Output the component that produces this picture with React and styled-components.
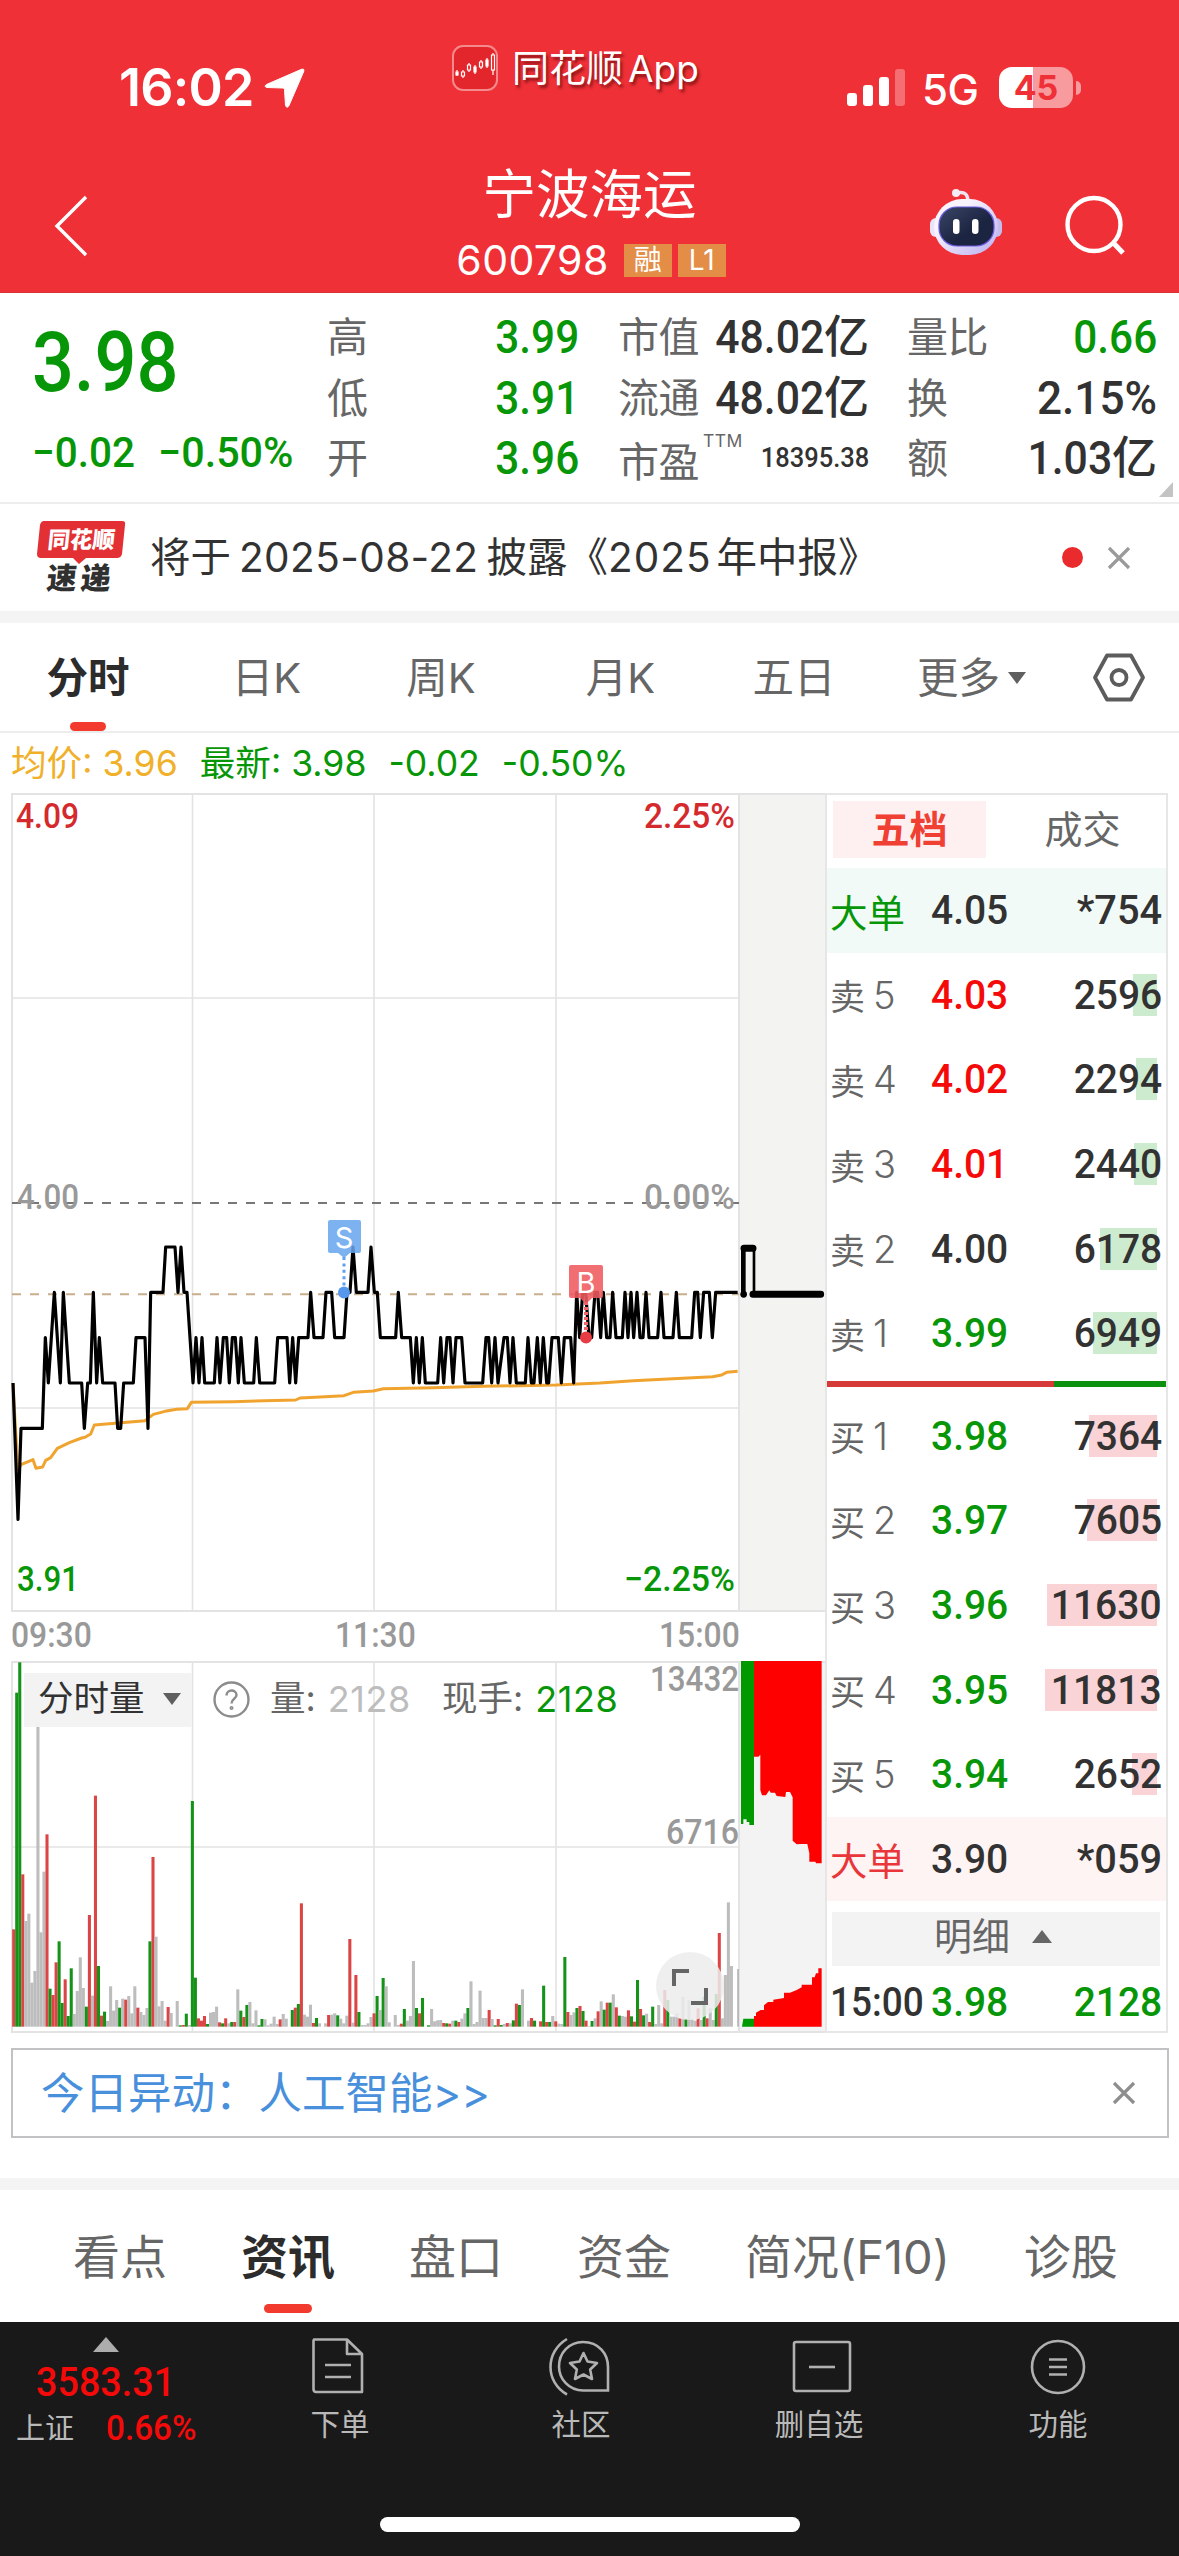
import React from 'react';
import styled, { createGlobalStyle } from 'styled-components';

const GREEN = '#079607';
const RED = '#f50a0a';

const GlobalStyle = createGlobalStyle`
  * {
    box-sizing: border-box;
  }

  body {
    margin: 0;
    background: #fff;
    font-family: Inter, 'Noto Sans CJK SC', sans-serif;
    color: #323232;
  }

  svg {
    display: block;
    flex: none;
    overflow: visible;
  }
`;

const Page = styled.div`
  width: 1179px;
  height: 2556px;
  display: flex;
  flex-direction: column;
  overflow: hidden;
  white-space: nowrap;
`;

/* narrow digits used for all prices and volumes */
const Num = styled.span`
  display: inline-block;
  font-family: Roboto, sans-serif;
  font-weight: 500;
  font-size: ${(p) => p.$size || 46}px;
  color: ${(p) => p.$color || '#323232'};
  transform: scaleX(${(p) => p.$squeeze || 0.92});
  transform-origin: ${(p) => p.$origin || 'right'} center;
`;

/* ---------- header ---------- */

const Header = styled.header`
  height: 293px;
  flex: none;
  background: #ef3037;
  color: #fff;
  border-bottom: 1px solid #d8353b;
`;

const StatusBar = styled.div`
  height: 150px;
  display: flex;
  align-items: flex-start;
  padding-left: 119px;
`;

const Clock = styled.div`
  width: 145px;
  margin-top: 57px;
  font-size: 52px;
  line-height: 62px;
  font-weight: 600;
  letter-spacing: -0.8px;
`;

const LocationIcon = styled.svg`
  margin-top: 68px;
`;

const AppMark = styled.div`
  margin-left: 147px;
  margin-top: 44px;
  width: 394px;
  display: flex;
  align-items: center;
  gap: 14px;
`;

const AppLabel = styled.span`
  font-size: 37px;
  line-height: 46px;
  padding-top: 2px;
  text-shadow: 2px 3px 3px rgba(70, 0, 0, 0.6);
`;

const AppWord = styled.span`
  margin-left: 5px;
`;

const Network = styled.span`
  margin: 64px 0 0 17px;
  width: 77px;
  font-size: 42px;
  line-height: 51px;
  font-weight: 500;
  letter-spacing: -0.5px;
`;

const Battery = styled.div`
  width: 74px;
  height: 41px;
  margin-top: 67px;
  border-radius: 13px;
  background: linear-gradient(90deg, #fff 46%, #f79b9f 46%);
  color: #ef3037;
  font-size: 34px;
  line-height: 42px;
  font-weight: 700;
  text-align: center;
`;

const BatteryTip = styled.div`
  width: 5px;
  height: 14px;
  margin: 81px 0 0 3px;
  border-radius: 0 7px 7px 0;
  background: #f79b9f;
`;

const TitleBar = styled.div`
  height: 142px;
  display: grid;
  grid-template-columns: 320px 1fr 320px;
`;

const BackIcon = styled.svg`
  margin: 45px 0 0 53px;
`;

const TitleBlock = styled.div`
  display: flex;
  flex-direction: column;
  align-items: center;
  padding-top: 14px;
`;

const StockName = styled.h1`
  margin: 0;
  font-size: 53.5px;
  line-height: 62px;
  font-weight: 400;
`;

const CodeRow = styled.div`
  display: flex;
  align-items: center;
  margin: 14px 0 0 9px;
  height: 40px;
`;

const Code = styled.span`
  font-size: 41px;
  line-height: 40px;
  letter-spacing: 0.4px;
  margin-right: 15px;
`;

const Badge = styled.span`
  width: 48px;
  height: 33px;
  margin-right: 6px;
  background: #e38d47;
  font-size: 28px;
  line-height: 33px;
  text-align: center;
`;

const TitleIcons = styled.div`
  display: flex;
  padding: 38px 0 0 71px;
  gap: 60px;
`;

/* ---------- quote ---------- */

const Quote = styled.section`
  position: relative;
  height: 211px;
  flex: none;
  display: flex;
  padding: 14px 0 0 32px;
  border-bottom: 2px solid #ededed;
`;

const PriceBlock = styled.div`
  width: 295px;
`;

const BigPrice = styled.div`
  height: 110px;
  line-height: 112px;
`;

const Change = styled.div`
  display: flex;
  height: 70px;
  line-height: 71px;
`;

const ChangeValue = styled.div`
  width: ${(p) => p.$width}px;
`;

const QuoteColumn = styled.div`
  width: ${(p) => p.$width}px;
  margin-right: ${(p) => p.$gap || 0}px;
`;

const QuoteRow = styled.div`
  height: 60.5px;
  display: flex;
  justify-content: space-between;
  align-items: center;
  line-height: 60px;
`;

const QuoteLabel = styled.span`
  font-size: 41px;
  color: #666;
  letter-spacing: -0.5px;
  padding-top: ${(p) => p.$drop || 0}px;
`;

const Sup = styled.sup`
  font-size: 17.5px;
  line-height: 1;
  vertical-align: 30px;
  margin-left: 4px;
  letter-spacing: 0.5px;
`;

const AmountValue = styled.span`
  display: flex;
  align-items: center;
`;

const Unit = styled.span`
  font-size: 45px;
  font-weight: 500;
`;

const Corner = styled.div`
  position: absolute;
  right: 6px;
  bottom: 5px;
  border-left: 14px solid transparent;
  border-bottom: 15px solid #c4c4c4;
`;

/* ---------- news ---------- */

const NewsBar = styled.section`
  height: 107px;
  flex: none;
  display: flex;
  align-items: center;
  padding-left: 35px;
`;

const NewsText = styled.div`
  width: 910px;
  padding-left: 22px;
  font-size: 40.5px;
  line-height: 60px;
  display: flex;
`;

const NewsPart = styled.span`
  letter-spacing: ${(p) => p.$track || 0}px;
  margin-right: ${(p) => p.$after || 0}px;
`;

const RedDot = styled.div`
  width: 21px;
  height: 21px;
  margin: 0 25px 0 24px;
  border-radius: 50%;
  background: #ea2b2d;
`;

const Divider = styled.div`
  height: 12px;
  flex: none;
  background: #f4f4f4;
`;

/* ---------- period tabs ---------- */

const PeriodTabs = styled.nav`
  height: 110px;
  flex: none;
  display: grid;
  grid-template-columns: 176px 181px 168px 191px 156px 199px 96px;
  border-bottom: 2px solid #ededed;
`;

const Tab = styled.div`
  display: flex;
  flex-direction: column;
  align-items: center;
  padding-top: 25px;
  font-size: 41.5px;
  line-height: 60px;
  color: ${(p) => (p.$active ? '#2c2c2c' : '#666')};
  font-weight: ${(p) => (p.$active ? 700 : 400)};
`;

const TabMark = styled.div`
  width: ${(p) => p.$width}px;
  height: 9px;
  margin-top: ${(p) => p.$top}px;
  border-radius: 5px;
  background: #f23a2f;
`;

const MoreLabel = styled.div`
  display: flex;
  align-items: center;
  gap: 8px;
`;

const Caret = styled.i`
  border: 9px solid transparent;
  border-top: 12px solid #5f5f5f;
  border-bottom: 0;
`;

const Summary = styled.div`
  height: 60px;
  flex: none;
  display: flex;
  gap: 22px;
  padding-left: 11px;
  font-size: 35.6px;
  line-height: 61px;
  color: ${GREEN};
`;

const Average = styled.span`
  color: #f0b02a;
`;

/* ---------- chart and order book ---------- */

const Market = styled.main`
  height: 1240px;
  flex: none;
  display: flex;
  margin: 0 11px;
  width: 1157px;
`;

const ChartColumn = styled.div`
  width: 814px;
`;

const TimeAxis = styled.div`
  width: 729px;
  height: 49px;
  display: flex;
  justify-content: space-between;
  line-height: 47px;
`;

const VolumePanel = styled.div`
  position: relative;
`;

const VolumeHead = styled.div`
  position: absolute;
  top: 12px;
  left: 13px;
  height: 54px;
  display: flex;
  align-items: center;
  font-size: 35.5px;
  line-height: 50px;
  padding-bottom: 2px;
  color: #666;
`;

const VolumeSelect = styled.div`
  width: 168px;
  height: 54px;
  margin-top: 2px;
  padding: 0 0 2px 14px;
  display: flex;
  align-items: center;
  gap: 18px;
  background: rgba(242, 243, 243, 0.96);
  color: #323232;
`;

const HelpIcon = styled.svg`
  margin: 0 20px 0 21px;
`;

const HeadValue = styled.span`
  margin: 0 ${(p) => p.$after || 0}px 0 12px;
  font-size: 36px;
  letter-spacing: 0.6px;
  color: ${(p) => p.$color};
`;

const ExpandButton = styled.div`
  position: absolute;
  left: 645px;
  top: 291px;
  width: 68px;
  height: 68px;
  border-radius: 50%;
  background: rgba(236, 236, 236, 0.85);
`;

const Book = styled.aside`
  width: 343px;
  border: 2px solid #e6e6e6;
`;

const BookTabs = styled.div`
  height: 73px;
  display: flex;
  padding: 6px 0 0 6px;
`;

const BookTab = styled.div`
  flex: none;
  width: ${(p) => (p.$active ? 153 : 179)}px;
  height: 57px;
  font-size: 38px;
  line-height: 56px;
  text-align: center;
  font-weight: ${(p) => (p.$active ? 700 : 400)};
  color: ${(p) => (p.$active ? '#f04034' : '#666')};
  background: ${(p) => (p.$active ? '#fef0f0' : 'none')};
  padding-left: ${(p) => (p.$active ? 0 : 14)}px;
`;

const BookRow = styled.div`
  height: ${(p) => p.$height || 84.6}px;
  display: flex;
  align-items: center;
  padding: 0 4px 0 3px;
  background: ${(p) => p.$tint || 'none'};
`;

const BookLabel = styled.div`
  width: 101px;
  display: flex;
  align-items: center;
  font-size: ${(p) => p.$size || 35}px;
  color: ${(p) => p.$color || '#666'};
`;

const Level = styled.span`
  font-size: 38px;
  font-weight: 300;
  margin-left: 8px;
`;

const BookPrice = styled.div`
  width: 90px;
`;

const BookVolume = styled.div`
  flex: 1;
  height: 42px;
  line-height: 42px;
  text-align: right;
  background: linear-gradient(${(p) => p.$fill}, ${(p) => p.$fill}) no-repeat;
  background-size: ${(p) => p.$bar}px 42px;
  background-position: right 5px top;
`;

const Ratio = styled.div`
  height: 6px;
  margin: 5px 0 7px;
  background: linear-gradient(90deg, #d53a38 67%, #0a910d 67%);
`;

const DetailButton = styled.div`
  height: 54px;
  margin: 11px 6px 0 5px;
  display: flex;
  align-items: center;
  justify-content: center;
  gap: 22px;
  padding: 0 6px 5px 0;
  background: #f3f3f3;
  font-size: 38px;
  line-height: 49px;
  color: #666;
`;

const UpCaret = styled.i`
  border: ${(p) => p.$w}px solid transparent;
  border-bottom: ${(p) => p.$h}px solid ${(p) => p.$color};
  border-top: 0;
`;

/* ---------- notice, info tabs, bottom bar ---------- */

const Notice = styled.section`
  height: 90px;
  flex: none;
  margin: 15px 10px 40px 11px;
  padding: 0 32px 0 28px;
  display: flex;
  align-items: center;
  justify-content: space-between;
  border: 2px solid #c2c2c4;
  font-size: 43.5px;
  line-height: 60px;
  color: #488fdc;
`;

const InfoTabs = styled.nav`
  height: 132px;
  flex: none;
  display: flex;
  gap: 74px;
  padding-left: 73px;
`;

const InfoTab = styled(Tab)`
  font-size: 47px;
  padding-top: 37px;
`;

const BottomBar = styled.footer`
  flex: 1;
  position: relative;
  display: grid;
  grid-template-columns: 211px 258px 224px 252px 226px;
  background: #191919;
  color: #b9b9b9;
`;

const IndexBlock = styled.div`
  display: flex;
  flex-direction: column;
  align-items: center;
  padding-top: 15px;
`;

const IndexValue = styled.div`
  height: 48px;
  line-height: 48px;
  margin-top: 6px;
`;

const IndexRow = styled.div`
  width: 100%;
  display: flex;
  padding-left: 16px;
  gap: 32px;
  align-items: center;
  font-size: 29px;
  line-height: 44px;
  margin-top: 1px;
`;

const NavItem = styled.div`
  display: flex;
  flex-direction: column;
  align-items: center;
  padding-top: 14px;
  gap: 6px;
  font-size: 29.5px;
  line-height: 44px;
`;

const HomeIndicator = styled.div`
  position: absolute;
  left: 380px;
  bottom: 24px;
  width: 420px;
  height: 15px;
  border-radius: 8px;
  background: #fff;
`;

/* ---------- data ---------- */

// y of every price level in the chart, in thirds of a pixel
const LEVEL = { a: 261, b: 397, c: 533, d: 669, e: 805, f: 1078 };

const PRICE =
  '39d 54f 63e 127e 136c 145d 163b 181d 190b 208d 245d 253e 263d 271d 280b 290d 298c 308d 345d 353e 362e 371d 400d 408c 435c 444e 452b 489b 497a 525a 534b 543a 552b 561b 579d 588c 597d 606c 614d 643d 651c 660d 670c 680c 688d 697c 706c 715d 723c 733d 761d 769c 779d 824d 833c 861c 869d 878c 887d 896c 924c 932b 942c 969c 978b 995b 1004c 1032c 1041b 1050b 1059a 1069b 1104b 1113a 1123b 1132b 1141c 1187c 1195b 1205c 1231c 1240d 1249c 1258d 1267c 1276d 1313d 1322c 1331d 1341c 1350c 1359d 1368c 1385c 1395d 1448d 1458c 1466c 1475d 1485c 1494d 1512c 1522c 1530d 1539c 1549d 1576d 1584c 1594d 1602d 1612c 1621d 1630c 1640d 1646d 1656c 1675c 1684d 1693c 1712c 1721d 1730b 1739c 1748b 1757b 1767c 1775c 1785b 1793b 1802c 1810b 1820c 1830c 1838b 1848c 1867c 1875b 1884c 1893b 1901c 1911b 1920c 1929c 1938b 1947c 1973c 1983b 1992c 2019c 2029b 2038c 2075c 2084b 2093b 2101c 2111b 2128b 2137c 2147b 2213b';

const pricePoints = PRICE.split(' ')
  .map((p) => `${p.slice(0, -1)},${LEVEL[p.slice(-1)]}`)
  .join(' ');

const averagePoints =
  '39,669 46,800 54,930 63,914 99,899 108,925 128,921 137,901 152,893 172,865 208,848 245,834 255,832 272,822 283,795 345,790 435,782 460,763 495,754 530,748 562,746 574,727 700,725 887,720 900,714 960,711 1032,707 1060,697 1120,693 1150,686 1300,683 1450,679 1668,675 1800,669 1900,662 2138,650 2165,645 2180,637 2213,634';

// one bar a minute: colour letter and top edge, "-" for a minute without trades
const VOLUME =
  'r988 g278 g187 r823 x963 x941 x1148 x1113 x365 x997 x815 r703 g1166 r1185 r1087 g1024 g1209 r1138 g1248 g1105 x1242 x1173 x1072 x1164 g1220 r945 x1187 r587 g1098 r1247 g1235 x1263 x1159 x1232 x1200 g1223 x1196 r1199 x1188 x1240 x1159 r1223 x1236 x1245 x1224 g1024 r771 x1010 x1219 x1203 x1262 r1221 x1239 - x1203 g1276 r1275 g1241 x1275 g603 g1133 r1255 r1262 r1248 g1272 x1238 x1236 x1220 r1267 g1270 r1255 x1270 g1266 r1266 x1168 g1232 r1251 g1215 x1206 x1270 x1231 g1276 g1257 x1258 x1276 x1271 x1250 x1272 r1258 x1242 x1256 - g1230 r1223 g1212 r910 x1244 x1250 x1214 r1269 g1254 x1270 - x1270 r1245 x1244 x1240 g1246 x1256 x1270 x1247 r1017 x1268 r1125 g1236 x1275 x1275 x1270 x1251 r1240 g1188 x1230 g1134 x1159 x1267 - x1245 x1275 r1271 g1227 x1262 x1248 x1083 g1224 r1240 g1194 - g1276 x1227 x1264 x1261 x1260 r1269 g1270 r1271 x1262 g1262 r1266 x1256 x1240 g1224 x1144 x1272 x1266 x1172 x1254 x1254 r1230 x1257 g1276 r1257 g1275 x1272 r1269 x1270 g1261 r1211 g1215 x1168 - x1262 r1254 g1262 - r1264 g1157 r1266 g1266 x1248 r1264 x1271 x1272 g1071 r1236 x1245 x1237 g1224 r1218 g1233 r1262 x1278 g1263 x1255 r1234 x1204 g1229 r1208 g1208 x1183 r1222 g1247 x1248 x1250 r1231 g1249 r1265 g1140 r1227 g1246 x1241 r1266 g1220 x1272 x1215 x1270 r1170 g1200 x1250 x1250 x1240 r1255 x1190 g1257 x1200 x1258 x1262 r1225 x1260 g1190 r1255 x1225 x1260 g1182 r999 x1255 x1125 x907 x1098';

const BAR_COLORS = { r: '#dc4545', g: '#159318', x: '#bdbdbd' };

const sells = [
  ['5', '4.03', '2596', RED, 24],
  ['4', '4.02', '2294', RED, 21],
  ['3', '4.01', '2440', RED, 23],
  ['2', '4.00', '6178', '#323232', 57],
  ['1', '3.99', '6949', GREEN, 64],
];

const buys = [
  ['1', '3.98', '7364', 68],
  ['2', '3.97', '7605', 70],
  ['3', '3.96', '11630', 110],
  ['4', '3.95', '11813', 112],
  ['5', '3.94', '2652', 25],
];

/* ---------- pieces ---------- */

function Close({ color = '#9a9a9a' }) {
  return (
    <svg width="22" height="22" viewBox="0 0 22 22" stroke={color} strokeWidth="3.2">
      <path d="M1 1L21 21M21 1L1 21" />
    </svg>
  );
}

function AppIcon() {
  return (
    <svg width="46" height="46" viewBox="0 0 46 46" fill="none">
      <rect x="1" y="1" width="44" height="44" rx="10" fill="#e3262b" stroke="#f58a8d" strokeWidth="2" />
      <g stroke="#fff" strokeWidth="1.2">
        <path d="M5 25v6M11 25v8M17 18v9M23 20v9M29 15v9M35 13v10M41 8v22" />
        <path d="M9.5 27h3v4h-3zM15.5 20h3v5h-3zM27.5 17h3v5h-3zM39.5 10h3v15h-3z" fill="#e3262b" />
        <path d="M4 27h2v3H4zM22 22h2v5h-2zM34 15h2v6h-2z" fill="#fff" />
      </g>
    </svg>
  );
}

function Robot() {
  return (
    <svg width="73" height="68" viewBox="0 0 73 68">
      <defs>
        <linearGradient id="shell" x1="0" y1="0" x2="1" y2="1">
          <stop offset="0.3" stopColor="#f8f3fd" />
          <stop offset="1" stopColor="#b9aef0" />
        </linearGradient>
        <linearGradient id="visor" x1="0" y1="0" x2="1" y2="1">
          <stop offset="0" stopColor="#3a4668" />
          <stop offset="0.6" stopColor="#1b2440" />
        </linearGradient>
      </defs>
      <path d="M27 5C35 3 38 7 38 13" fill="none" stroke="#eee4f4" strokeWidth="3.4" />
      <circle cx="26" cy="5" r="4" fill="#f3ecf6" />
      <rect x="0" y="30" width="12" height="19" rx="6" fill="#e9e4f7" />
      <rect x="60" y="30" width="12" height="19" rx="6" fill="#c5bcee" />
      <rect x="4" y="11" width="64" height="56" rx="28" fill="url(#shell)" />
      <rect x="9" y="19" width="55" height="39" rx="18" fill="url(#visor)" stroke="#6a5be0" strokeWidth="1.2" />
      <rect x="23" y="31" width="6.5" height="15" rx="3.2" fill="#fff" />
      <rect x="42" y="31" width="6.5" height="15" rx="3.2" fill="#fff" />
    </svg>
  );
}

function ExpressLogo() {
  const font = { fontFamily: 'Noto Sans CJK SC', fontWeight: 900 };
  return (
    <svg width="93" height="76" viewBox="0 0 93 76">
      <path d="M9 1H87Q91 1 90 5L87 34Q86 38 82 38H51L44 44L38 38H6Q2 38 2 34L5 5Q6 1 9 1Z" fill="#e33034" />
      <g transform="skewX(-6)">
        <text x="15" y="28.5" {...font} fontSize="23" fill="#fff" textLength="67" lengthAdjust="spacingAndGlyphs">
          同花顺
        </text>
        <text x="18" y="69" {...font} fontSize="30" fill="#303030" textLength="64">
          速递
        </text>
      </g>
    </svg>
  );
}

function ChartLabel({ x, y, w, color, end, children }) {
  return (
    <text
      x={x}
      y={y}
      fontFamily="Roboto"
      fontWeight="500"
      fontSize="34.5"
      fill={color}
      textAnchor={end ? 'end' : 'start'}
      textLength={w}
      lengthAdjust="spacingAndGlyphs"
    >
      {children}
    </text>
  );
}

function PriceChart() {
  return (
    <svg width="814" height="819" viewBox="11 793 814 819">
      <rect x="739" y="794" width="86" height="818" fill="#f3f3f2" />
      <g stroke="#e3e3e3" strokeWidth="1.6" fill="none">
        <path d="M12 794H825M12 1611H825" strokeWidth="2" />
        <path d="M12 793V1612M739 793V1612" strokeWidth="2" />
        <path d="M192.5 793V1612M374 793V1612M556 793V1612M12 998H739M12 1408H739" />
      </g>
      <path d="M12 1203H739" stroke="#777" strokeWidth="2" strokeDasharray="9 9" />
      <path d="M12 1294.2H739" stroke="#c8ae8d" strokeWidth="2" strokeDasharray="9 9" />
      <g transform="translate(0 1160) scale(0.33333)" fill="none" strokeLinejoin="round">
        <polyline points={averagePoints} stroke="#f0a42f" strokeWidth="9" />
        <polyline points={pricePoints} stroke="#000" strokeWidth="9.5" />
        <path d="M2230 403V265" stroke="#000" strokeWidth="14" strokeLinecap="round" />
        <path d="M2232 265H2259M2259 403H2462" stroke="#000" strokeWidth="21" strokeLinecap="round" />
        <path d="M2262 265V403" stroke="#000" strokeWidth="8" />
        <circle cx="2231" cy="403" r="10" fill="#000" />
      </g>

      <path d="M344 1257V1290" stroke="#5e9fee" strokeWidth="3" strokeDasharray="3 3.4" />
      <path d="M330 1220H359Q361 1220 361 1222V1251Q361 1253 359 1253H350L344 1258L338 1253H330Q328 1253 328 1251V1222Q328 1220 330 1220Z" fill="#66a5ee" fillOpacity="0.86" />
      <circle cx="344" cy="1292.5" r="6" fill="#5698ec" />
      <text x="344" y="1248" fontFamily="Inter" fontSize="29" fill="#fff" textAnchor="middle">S</text>

      <path d="M586 1302V1334" stroke="#f2666b" strokeWidth="4" strokeDasharray="3 2" />
      <path d="M571 1265H601Q603 1265 603 1267V1296Q603 1298 601 1298H592L586 1304L580 1298H571Q569 1298 569 1296V1267Q569 1265 571 1265Z" fill="#ef5a60" fillOpacity="0.88" />
      <circle cx="586" cy="1337.5" r="6" fill="#e63d45" />
      <text x="586" y="1293" fontFamily="Inter" fontSize="29" fill="#fff" textAnchor="middle">B</text>

      <ChartLabel x={16} y={828} w={63} color="#d42a2e">4.09</ChartLabel>
      <ChartLabel x={735} y={828} w={91} color="#d42a2e" end>2.25%</ChartLabel>
      <ChartLabel x={17} y={1209} w={62} color="#999">4.00</ChartLabel>
      <ChartLabel x={735} y={1209} w={91} color="#999" end>0.00%</ChartLabel>
      <ChartLabel x={17} y={1591} w={62} color={GREEN}>3.91</ChartLabel>
      <ChartLabel x={735} y={1591} w={111} color={GREEN} end>−2.25%</ChartLabel>
    </svg>
  );
}

function VolumeChart() {
  return (
    <svg width="814" height="372" viewBox="11 1661 814 372">
      <rect x="739" y="1661" width="86" height="371" fill="#f3f3f3" />
      <g stroke="#e3e3e3" strokeWidth="1.6" fill="none">
        <path d="M12 1662H825M12 2032H825M12 1661V2033M739 1661V2033" strokeWidth="2" />
        <path d="M192.5 1661V2032M374 1661V2032M556 1661V2032M12 1847H739" />
      </g>
      <g transform="translate(0 1600) scale(0.33333)">
        {VOLUME.split(' ').map((bar, i) =>
          bar === '-' ? null : (
            <rect
              key={i}
              x={36.5 + i * 9.085}
              y={Number(bar.slice(1))}
              width="9.2"
              height={1280 - Number(bar.slice(1))}
              fill={BAR_COLORS[bar[0]]}
            />
          )
        )}
        <path d="M2214 1107V1280" stroke="#8a8a8a" strokeWidth="3" />
        <path d="M2223 183H2262V675H2248V666H2240V658H2230V672H2223Z" fill="#009a00" />
        <path
          d="M2262 183H2465V790H2448L2446 785H2428V760L2422 732H2404L2390 733L2378 722V592L2370 576H2358L2356 591L2330 588L2325 578H2312L2308 571L2298 586H2286L2281 570V464L2275 470H2262Z"
          fill="#fe0000"
        />
        <path d="M2226 1280L2230 1256H2262V1280Z" fill="#009a00" />
        <path
          d="M2262 1280V1248H2268V1238L2282 1230H2292V1216L2304 1206H2320V1199L2352 1194V1178H2370L2390 1170L2405 1162V1154H2436V1132H2444L2448 1120H2455V1105H2465V1280Z"
          fill="#fe0000"
        />
      </g>
      <ChartLabel x={739} y={1690.5} w={89} color="#999" end>13432</ChartLabel>
      <ChartLabel x={739} y={1844} w={73} color="#999" end>6716</ChartLabel>
    </svg>
  );
}

function Amount({ children }) {
  return (
    <AmountValue>
      <Num $squeeze={0.93}>{children}</Num>
      <Unit>亿</Unit>
    </AmountValue>
  );
}

function OrderRow({ side, level, price, volume, color, bar, fill }) {
  return (
    <BookRow>
      <BookLabel>
        {side}
        <Level>{level}</Level>
      </BookLabel>
      <BookPrice>
        <Num $size={41} $color={color} $origin="left" $squeeze={0.95}>{price}</Num>
      </BookPrice>
      <BookVolume $bar={bar} $fill={fill}>
        <Num $size={41} $squeeze={0.95}>{volume}</Num>
      </BookVolume>
    </BookRow>
  );
}

function BigOrderRow({ price, volume, color, tint }) {
  return (
    <BookRow $tint={tint}>
      <BookLabel $size={37.5} $color={color}>大单</BookLabel>
      <BookPrice>
        <Num $size={41} $origin="left" $squeeze={0.95}>{price}</Num>
      </BookPrice>
      <BookVolume $bar={0} $fill="transparent">
        <Num $size={41} $squeeze={0.97}>{volume}</Num>
      </BookVolume>
    </BookRow>
  );
}

function App() {
  return (
    <Page>
      <GlobalStyle />

      <Header>
        <StatusBar>
          <Clock>16:02</Clock>
          <LocationIcon width="41" height="41" viewBox="0 0 41 41">
            <path d="M37 1.5Q41 0 39.5 4L25 37.5Q23 41 21.5 37.5L20.5 21.5Q20.5 20 19 20L3 19.5Q-0.5 18.5 2.5 16.5Z" fill="#fff" stroke="#fff" strokeLinejoin="round" />
          </LocationIcon>
          <AppMark>
            <AppIcon />
            <AppLabel>
              同花顺<AppWord>App</AppWord>
            </AppLabel>
          </AppMark>
          <svg width="59" height="108" viewBox="845 0 59 108" fill="#fff">
            <rect x="846" y="93" width="10" height="13" rx="3" />
            <rect x="862" y="85" width="10" height="21" rx="3" />
            <rect x="878" y="77" width="10" height="29" rx="3" />
            <rect x="894" y="69" width="10" height="37" rx="3" opacity="0.3" />
          </svg>
          <Network>5G</Network>
          <Battery>45</Battery>
          <BatteryTip />
        </StatusBar>
        <TitleBar>
          <BackIcon width="36" height="62" viewBox="0 0 36 62" fill="none" stroke="#fff" strokeWidth="3.4">
            <path d="M33 2L4 31L33 60" />
          </BackIcon>
          <TitleBlock>
            <StockName>宁波海运</StockName>
            <CodeRow>
              <Code>600798</Code>
              <Badge>融</Badge>
              <Badge>L1</Badge>
            </CodeRow>
          </TitleBlock>
          <TitleIcons>
            <Robot />
            <svg width="64" height="68" viewBox="0 0 64 68" fill="none" stroke="#fff" strokeWidth="4.4">
              <circle cx="31" cy="36.5" r="26.5" />
              <path d="M50 54.5L60 65" strokeWidth="5" />
            </svg>
          </TitleIcons>
        </TitleBar>
      </Header>

      <Quote>
        <PriceBlock>
          <BigPrice>
            <Num $size={84} $color={GREEN} $origin="left" $squeeze={0.88}>3.98</Num>
          </BigPrice>
          <Change>
            <ChangeValue $width={126}>
              <Num $size={43} $color={GREEN} $origin="left" $squeeze={0.94}>−0.02</Num>
            </ChangeValue>
            <ChangeValue $width={140}>
              <Num $size={43} $color={GREEN} $origin="left" $squeeze={0.96}>−0.50%</Num>
            </ChangeValue>
          </Change>
        </PriceBlock>
        <QuoteColumn $width={252} $gap={39}>
          <QuoteRow>
            <QuoteLabel>高</QuoteLabel>
            <Num $color={GREEN}>3.99</Num>
          </QuoteRow>
          <QuoteRow>
            <QuoteLabel>低</QuoteLabel>
            <Num $color={GREEN}>3.91</Num>
          </QuoteRow>
          <QuoteRow>
            <QuoteLabel>开</QuoteLabel>
            <Num $color={GREEN}>3.96</Num>
          </QuoteRow>
        </QuoteColumn>
        <QuoteColumn $width={251} $gap={38}>
          <QuoteRow>
            <QuoteLabel>市值</QuoteLabel>
            <Amount>48.02</Amount>
          </QuoteRow>
          <QuoteRow>
            <QuoteLabel>流通</QuoteLabel>
            <Amount>48.02</Amount>
          </QuoteRow>
          <QuoteRow>
            <QuoteLabel $drop={8}>市盈<Sup>TTM</Sup></QuoteLabel>
            <Num $size={28} $squeeze={0.91}>18395.38</Num>
          </QuoteRow>
        </QuoteColumn>
        <QuoteColumn $width={250}>
          <QuoteRow>
            <QuoteLabel>量比</QuoteLabel>
            <Num $color={GREEN}>0.66</Num>
          </QuoteRow>
          <QuoteRow>
            <QuoteLabel>换</QuoteLabel>
            <Num $squeeze={0.96}>2.15%</Num>
          </QuoteRow>
          <QuoteRow>
            <QuoteLabel>额</QuoteLabel>
            <Amount>1.03</Amount>
          </QuoteRow>
        </QuoteColumn>
        <Corner />
      </Quote>

      <NewsBar>
        <ExpressLogo />
        <NewsText>
          <NewsPart $after={8}>将于</NewsPart>
          <NewsPart $after={8} $track={0.4}>2025-08-22</NewsPart>
          <NewsPart>披露《</NewsPart>
          <NewsPart $after={5} $track={1}>2025</NewsPart>
          <NewsPart>年中报》</NewsPart>
        </NewsText>
        <RedDot />
        <Close />
      </NewsBar>
      <Divider />

      <PeriodTabs>
        <Tab $active>
          分时
          <TabMark $width={36} $top={14} />
        </Tab>
        <Tab>日K</Tab>
        <Tab>周K</Tab>
        <Tab>月K</Tab>
        <Tab>五日</Tab>
        <Tab>
          <MoreLabel>更多<Caret /></MoreLabel>
        </Tab>
        <Tab>
          <svg width="52" height="58" viewBox="0 0 52 58" fill="none" stroke="#5c5c5c" strokeWidth="3.8">
            <path d="M14 7.5H38L50 29.5L38 51.5H14L2 29.5Z" strokeLinejoin="round" />
            <circle cx="26" cy="29.5" r="7.5" />
          </svg>
        </Tab>
      </PeriodTabs>

      <Summary>
        <Average>均价: 3.96</Average>
        <span>最新: 3.98</span>
        <span>-0.02</span>
        <span>-0.50%</span>
      </Summary>

      <Market>
        <ChartColumn>
          <PriceChart />
          <TimeAxis>
            <Num $size={35} $color="#999" $origin="left" $squeeze={0.91}>09:30</Num>
            <Num $size={35} $color="#999" $origin="center" $squeeze={0.91}>11:30</Num>
            <Num $size={35} $color="#999" $squeeze={0.91}>15:00</Num>
          </TimeAxis>
          <VolumePanel>
            <VolumeChart />
            <VolumeHead>
              <VolumeSelect>分时量<Caret /></VolumeSelect>
              <HelpIcon width="37" height="37" viewBox="0 0 37 37" fill="none" stroke="#8c8c8c" strokeWidth="2.4">
                <circle cx="18.5" cy="18.5" r="17" />
                <path d="M13.5 14.5C13.5 8 23.5 8 23.5 14C23.5 18 18.5 17.5 18.5 22.5" />
                <circle cx="18.5" cy="27" r="0.8" />
              </HelpIcon>
              量:
              <HeadValue $color="#bdbdbd" $after={31}>2128</HeadValue>
              现手:
              <HeadValue $color={GREEN}>2128</HeadValue>
            </VolumeHead>
            <ExpandButton>
              <svg width="68" height="68" viewBox="0 0 68 68" fill="none" stroke="#666" strokeWidth="4">
                <path d="M18 34V19H33M50 36V51H35" />
              </svg>
            </ExpandButton>
          </VolumePanel>
        </ChartColumn>

        <Book>
          <BookTabs>
            <BookTab $active>五档</BookTab>
            <BookTab>成交</BookTab>
          </BookTabs>
          <BigOrderRow price="4.05" volume="*754" color={GREEN} tint="#f2faf7" />
          {sells.map(([level, price, volume, color, bar]) => (
            <OrderRow key={level} side="卖" level={level} price={price} volume={volume} color={color} bar={bar} fill="#cdebcf" />
          ))}
          <Ratio />
          {buys.map(([level, price, volume, bar]) => (
            <OrderRow key={level} side="买" level={level} price={price} volume={volume} color={GREEN} bar={bar} fill="#f9d3d6" />
          ))}
          <BigOrderRow price="3.90" volume="*059" color="#e8363b" tint="#fff4f4" />
          <DetailButton>
            明细
            <UpCaret $w={10} $h={13} $color="#666" />
          </DetailButton>
          <BookRow $height={72}>
            <BookLabel>
              <Num $size={41} $origin="left" $squeeze={0.9}>15:00</Num>
            </BookLabel>
            <BookPrice>
              <Num $size={41} $color={GREEN} $origin="left" $squeeze={0.95}>3.98</Num>
            </BookPrice>
            <BookVolume $bar={0} $fill="transparent">
              <Num $size={41} $color={GREEN} $squeeze={0.95}>2128</Num>
            </BookVolume>
          </BookRow>
        </Book>
      </Market>

      <Notice>
        今日异动：人工智能&gt;&gt;
        <Close color="#8e8e8e" />
      </Notice>
      <Divider />

      <InfoTabs>
        <InfoTab>看点</InfoTab>
        <InfoTab $active>
          资讯
          <TabMark $width={48} $top={17} />
        </InfoTab>
        <InfoTab>盘口</InfoTab>
        <InfoTab>资金</InfoTab>
        <InfoTab>简况(F10)</InfoTab>
        <InfoTab>诊股</InfoTab>
      </InfoTabs>

      <BottomBar>
        <IndexBlock>
          <UpCaret $w={13} $h={15} $color="#adadad" />
          <IndexValue>
            <Num $size={41} $color={RED} $origin="center">3583.31</Num>
          </IndexValue>
          <IndexRow>
            上证
            <Num $size={35} $color={RED} $origin="left" $squeeze={0.95}>0.66%</Num>
          </IndexRow>
        </IndexBlock>
        <NavItem>
          <svg width="60" height="60" viewBox="0 0 60 60" fill="none" stroke="#b0b0b0" strokeWidth="2.6">
            <path d="M4 3.5H37L52 18V56H6Q3.5 56 3.5 53V5Q3.5 3.5 5 3.5ZM37 3.5V18H52" strokeLinejoin="round" />
            <path d="M15 29H41M15 41H41" />
          </svg>
          下单
        </NavItem>
        <NavItem>
          <svg width="60" height="60" viewBox="0 0 60 60" fill="none" stroke="#b0b0b0" strokeWidth="2.6">
            <g transform="translate(-2 0)">
              <path d="M18 3C-4 16 -4 46 18 58.5" />
              <path d="M34 6C50 6 59 18 59 31V54.5H34C20 54.5 10 43 10 30.5C10 17 20 6 34 6Z" />
              <path d="M34.5 17L38.5 25.5L48 27L41.2 33.5L43 43L34.5 38.5L26 43L27.8 33.5L21 27L30.5 25.5Z" strokeLinejoin="round" />
            </g>
          </svg>
          社区
        </NavItem>
        <NavItem>
          <svg width="60" height="60" viewBox="0 0 60 60" fill="none" stroke="#b0b0b0" strokeWidth="2.6">
            <rect x="5" y="6" width="56" height="49" rx="2" />
            <path d="M20 31H46" />
          </svg>
          删自选
        </NavItem>
        <NavItem>
          <svg width="60" height="60" viewBox="0 0 60 60" fill="none" stroke="#b0b0b0" strokeWidth="2.6">
            <circle cx="30" cy="31" r="26" />
            <path d="M21 23.5H39M21 31H39M21 38.5H39" />
          </svg>
          功能
        </NavItem>
        <HomeIndicator />
      </BottomBar>
    </Page>
  );
}

export default App;
